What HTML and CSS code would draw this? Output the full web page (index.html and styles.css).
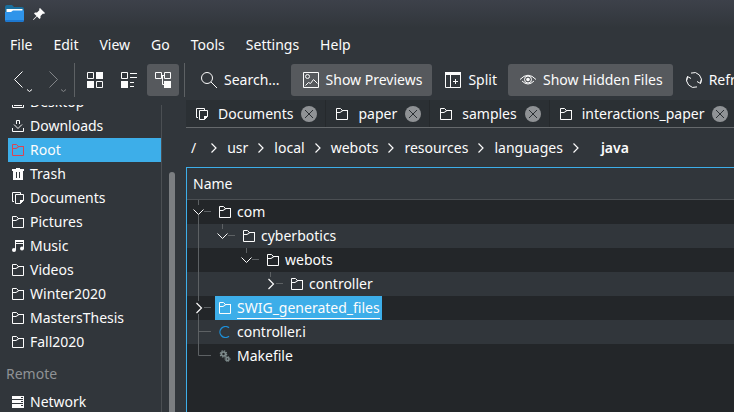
FILE: index.html
```html
<!DOCTYPE html>
<html lang="en">
<head>
<meta charset="utf-8">
<title>java — Dolphin</title>
<link rel="stylesheet" href="styles.css">
</head>
<body>
<svg class="defs" aria-hidden="true">
  <symbol id="folder" viewBox="0 0 12 12"><path d="M.5 .5h4l2 2h5v9H.5z" fill="none" stroke="currentColor"/><path d="M0 5h4l3-2h5V2H6.500L4 4H0z" fill="currentColor"/></symbol>
  <symbol id="docs" viewBox="0 0 12 12"><path d="M2 9.500H.5v-9h8V2M3.500 2.500h8v6l-3 3h-5z" fill="none" stroke="currentColor"/><path d="M8 12V8h4z" fill="currentColor"/></symbol>
  <symbol id="close" viewBox="0 0 16 16"><circle cx="8" cy="8" r="8" fill="#8f9295"/><path d="M4 4l8 8M12 4l-8 8" stroke="#2b3034" fill="none"/></symbol>
  <symbol id="right" viewBox="0 0 6 10"><path d="M.5 .5L5 5L.5 9.500" fill="none" stroke="currentColor" stroke-width="1.200"/></symbol>
  <symbol id="pipe" viewBox="0 0 24 24"><path d="M11.500 0v24" stroke="#5d6164"/></symbol>
  <symbol id="open" viewBox="0 0 24 24"><path d="M11.500 0v5M17 11.500h7" stroke="#5d6164"/><path d="M6.500 9.500l5 5l5-5" fill="none" stroke="#fcfcfc"/></symbol>
  <symbol id="shut" viewBox="0 0 24 24"><path d="M11.500 0v5M17 11.500h7" stroke="#5d6164"/><path d="M9.500 7l5 5l-5 5" fill="none" stroke="#fcfcfc" stroke-width="1.200"/></symbol>
</svg>

<header class="titlebar">
  <svg class="app" viewBox="0 0 20 18"><path d="M0 2q0-2 2-2h5l2 2h8q2 0 2 2v11H0z" fill="#1a6f9e"/><path d="M1.500 4h16v4h-16z" fill="#fff"/><path d="M0 7h6l2-1.500h11V15q0 2-2 2H2q-2 0-2-2z" fill="#2f94ea"/><path d="M0 15h19q0 2-2 2H2q-2 0-2-2z" fill="#1d78d0"/></svg>
  <svg class="pin" viewBox="0 0 12 12"><path d="M7 0l5 5-1 1-1-.5L7.500 8v2l-1 1L4 8.500L.5 12 0 11.500 3.500 8 1 5.500l1-1h2L6.500 2 6 1z" fill="#fcfcfc"/></svg>
</header>

<nav class="menubar">
  <button>File</button><button>Edit</button><button>View</button><button>Go</button><button>Tools</button><button>Settings</button><button>Help</button>
</nav>

<div class="toolbar">
  <button class="arrow" aria-label="Back"><svg viewBox="0 0 22 24"><path d="M11.500 2.500l-8 8 8 8" fill="none" stroke="#fcfcfc"/><path d="M16 20.500l2.500 2 2.500-2" fill="none" stroke="#fcfcfc"/></svg></button>
  <button class="arrow off" aria-label="Forward" disabled><svg viewBox="0 0 22 24"><path d="M4.500 2.500l8 8-8 8" fill="none" stroke="#fcfcfc"/><path d="M16 20.500l2.500 2 2.500-2" fill="none" stroke="#fcfcfc"/></svg></button>
  <span class="sep"></span>
  <button class="square" aria-label="Icons"><svg class="i16" viewBox="0 0 16 16"><path d="M.5 .5h6v6h-6zM9.500 9.500h6v6h-6z" fill="none" stroke="#fcfcfc"/><path d="M9 0h7v7H9zM0 9h7v7H0z" fill="#fcfcfc"/></svg></button>
  <button class="square" aria-label="Compact"><svg class="i16" viewBox="0 0 16 16"><path d="M.5 .5h6v6h-6zM9 1.500h7M9 5.500h7M9 10.500h4M9 14.500h4" fill="none" stroke="#fcfcfc"/><path d="M0 9h7v7H0z" fill="#fcfcfc"/></svg></button>
  <button class="square on" aria-label="Details"><svg class="i16" viewBox="0 0 16 16"><path d="M.5 .5h6v6h-6zM9.500 .5h6v6h-6zM7 3.500h2M7.500 4v8.500H9" fill="none" stroke="#fcfcfc"/><path d="M9 9h7v7H9z" fill="#fcfcfc"/></svg></button>
  <span class="sep narrow"></span>
  <button class="labelled"><svg class="i16" viewBox="0 0 16 16"><circle cx="6" cy="6" r="5.500" fill="none" stroke="#fcfcfc"/><path d="M10 10l6 6" stroke="#fcfcfc"/></svg>Search...</button>
  <button class="labelled on"><svg class="i16" viewBox="0 0 16 16"><path d="M.5 .5h15v15H.5zM2.500 13.500l3-3 2 1 3-4 4 4" fill="none" stroke="#fcfcfc"/><circle cx="4.500" cy="4.500" r="2" fill="none" stroke="#fcfcfc"/></svg>Show Previews</button>
  <button class="labelled"><svg class="i16" viewBox="0 0 16 16"><path d="M.5 .5h15v15H.5zM5.500 3v13M8 9.500h5M10.500 7v5" fill="none" stroke="#fcfcfc"/><path d="M0 0h16v3H0z" fill="#fcfcfc"/></svg>Split</button>
  <button class="labelled on"><svg class="i16" viewBox="0 0 16 16"><path d="M0 7.500Q8-1 16 7.500" fill="none" stroke="#fcfcfc"/><path d="M2 9q6 6 12 0" fill="none" stroke="#fcfcfc"/><circle cx="8" cy="7.500" r="3.500" fill="none" stroke="#fcfcfc"/><circle cx="8" cy="7.500" r="1.800" fill="#fcfcfc"/></svg>Show Hidden Files</button>
  <button class="labelled"><svg class="i16" viewBox="0 0 16 16"><path d="M5 1.100A7.500 7.500 0 0 1 14.500 11.500M15.500 7.500l-1 4-3.500-2M11 14.900A7.500 7.500 0 0 1 1.500 4.500M.5 8.500l1-4L5 6.500" fill="none" stroke="#fcfcfc"/></svg>Refresh</button>
</div>

<main class="body">
  <aside class="places">
    <ul>
      <li><a href="#"><svg class="i12" viewBox="0 0 12 12"><path d="M.5 1.500h11v10H.5zM2 9.500h8" fill="none" stroke="currentColor"/></svg>Desktop</a></li>
      <li><a href="#"><svg class="i12" viewBox="0 0 12 12"><path d="M4.500 4V.5h3V4M2 4.500l4 4 4-4M.5 8v3.500h11V8" fill="none" stroke="currentColor"/></svg>Downloads</a></li>
      <li class="current"><a href="#"><svg class="i12 red"><use href="#folder"/></svg>Root</a></li>
      <li><a href="#"><svg class="i12" viewBox="0 0 12 12"><path d="M0 1h4V0h4v1h4v2h-1v9H1V3H0zM4 4v6h1V4zM7 4v6h1V4z" fill="currentColor" fill-rule="evenodd"/></svg>Trash</a></li>
      <li><a href="#"><svg class="i12"><use href="#docs"/></svg>Documents</a></li>
      <li><a href="#"><svg class="i12"><use href="#folder"/></svg>Pictures</a></li>
      <li><a href="#"><svg class="i12" viewBox="0 0 12 12"><path d="M3 0h9v9h-1V4H4v6H3z" fill="currentColor"/><path d="M4 2.500h7" stroke="#31363b"/><circle cx="2" cy="10" r="2" fill="currentColor"/><circle cx="10" cy="8.500" r="2" fill="currentColor"/></svg>Music</a></li>
      <li><a href="#"><svg class="i12"><use href="#folder"/></svg>Videos</a></li>
      <li><a href="#"><svg class="i12"><use href="#folder"/></svg>Winter2020</a></li>
      <li><a href="#"><svg class="i12"><use href="#folder"/></svg>MastersThesis</a></li>
      <li><a href="#"><svg class="i12"><use href="#folder"/></svg>Fall2020</a></li>
    </ul>
    <h2>Remote</h2>
    <ul>
      <li><a href="#"><svg class="i12" viewBox="0 0 12 12"><path d="M0 0h12v12H0z" fill="currentColor"/><path d="M0 3.500h11M0 7.500h11M9 1.500h2M9 5.500h2M9 9.500h2" stroke="#31363b"/></svg>Network</a></li>
    </ul>
  </aside>
  <div class="gutter"><div class="thumb"></div></div>
  <section class="content">
    <div class="tabs">
      <div class="tab"><svg class="i12"><use href="#docs"/></svg><a href="#">Documents</a><button aria-label="Close Documents"><svg class="i16"><use href="#close"/></svg></button></div>
      <div class="tab"><svg class="i12"><use href="#folder"/></svg><a href="#">paper</a><button aria-label="Close paper"><svg class="i16"><use href="#close"/></svg></button></div>
      <div class="tab"><svg class="i12"><use href="#folder"/></svg><a href="#">samples</a><button aria-label="Close samples"><svg class="i16"><use href="#close"/></svg></button></div>
      <div class="tab"><svg class="i12"><use href="#folder"/></svg><a href="#">interactions_paper</a><button aria-label="Close interactions_paper"><svg class="i16"><use href="#close"/></svg></button></div>
    </div>
    <nav class="crumbs">
      <a class="root" href="#">/</a><svg><use href="#right"/></svg><a href="#">usr</a><svg><use href="#right"/></svg><a href="#">local</a><svg><use href="#right"/></svg><a href="#">webots</a><svg><use href="#right"/></svg><a href="#">resources</a><svg><use href="#right"/></svg><a href="#">languages</a><svg><use href="#right"/></svg><a class="here" href="#">java</a>
    </nav>
    <div class="view">
      <table>
        <thead><tr><th>Name</th></tr></thead>
        <tbody>
          <tr><td><div class="row"><svg class="cell"><path d="M11.500 15v9" stroke="#5d6164"/><use href="#open"/></svg><span class="item"><svg class="i12"><use href="#folder"/></svg><span>com</span></span></div></td></tr>
          <tr><td><div class="row"><svg class="cell"><use href="#pipe"/></svg><svg class="cell"><use href="#open"/></svg><span class="item"><svg class="i12"><use href="#folder"/></svg><span>cyberbotics</span></span></div></td></tr>
          <tr><td><div class="row"><svg class="cell"><use href="#pipe"/></svg><span class="cell"></span><svg class="cell"><use href="#open"/></svg><span class="item"><svg class="i12"><use href="#folder"/></svg><span>webots</span></span></div></td></tr>
          <tr><td><div class="row"><svg class="cell"><use href="#pipe"/></svg><span class="cell"></span><span class="cell"></span><svg class="cell"><use href="#shut"/></svg><span class="item"><svg class="i12"><use href="#folder"/></svg><span>controller</span></span></div></td></tr>
          <tr><td><div class="row"><svg class="cell"><path d="M11.500 18v6" stroke="#5d6164"/><use href="#shut"/></svg><span class="item selected"><svg class="i12"><use href="#folder"/></svg><span>SWIG_generated_files</span></span></div></td></tr>
          <tr><td><div class="row"><svg class="cell"><path d="M11.500 0v24M12 11.500h12" stroke="#5d6164"/></svg><span class="item"><svg class="i12" viewBox="0 0 12 12"><path d="M10 1.800A5.500 5.500 0 1 0 10 10.200" fill="none" stroke="#1d8fd8" stroke-width="1.300"/></svg><span>controller.i</span></span></div></td></tr>
          <tr><td><div class="row"><svg class="cell"><path d="M11.500 0v11.500H24" fill="none" stroke="#5d6164"/></svg><span class="item"><svg class="i12" viewBox="0 0 12 12"><g fill="none" stroke="#7f8c8d"><circle cx="4.500" cy="4" r="2" stroke-width="1.600"/><circle cx="4.500" cy="4" r="3.200" stroke-width="1.200" stroke-dasharray="1.500 1"/><circle cx="8.500" cy="9" r="1.500" stroke-width="1.400"/><circle cx="8.500" cy="9" r="2.500" stroke-dasharray="1.200 .8"/></g></svg><span>Makefile</span></span></div></td></tr>
        </tbody>
      </table>
    </div>
  </section>
</main>
</body>
</html>
```
FILE: styles.css
```css
* { box-sizing: border-box; }
html, body { height: 100%; }
body {
  margin: 0;
  display: flex;
  flex-direction: column;
  overflow: hidden;
  background: #31363b;
  color: #fcfcfc;
  font: 14px/20px "Noto Sans", sans-serif;
  white-space: nowrap;
}
button {
  border: 0;
  padding: 0;
  background: none;
  color: inherit;
  font: inherit;
}
a { color: inherit; text-decoration: none; }
svg { display: block; flex: none; }
.defs { position: absolute; width: 0; height: 0; }
.i12 { width: 12px; height: 12px; }
.i16 { width: 16px; height: 16px; }

.titlebar {
  flex: none;
  display: flex;
  align-items: center;
  gap: 8px;
  height: 28px;
  padding-left: 5px;
  background: linear-gradient(#3d414a, #31363b);
}
.app { width: 20px; height: 18px; }
.pin { width: 12px; height: 12px; }

.menubar {
  flex: none;
  display: flex;
  gap: 21px;
  height: 34px;
  padding-left: 10px;
}

.toolbar {
  flex: none;
  display: flex;
  align-items: center;
  height: 36px;
  padding-left: 11px;
  overflow: hidden;
}
.toolbar button { flex: none; height: 32px; border-radius: 3px; }
.arrow { width: 34px; }
.arrow svg { width: 22px; height: 24px; margin-top: 2px; }
.arrow.off { opacity: .4; }
.square { width: 32px; margin-right: 2px; display: grid; place-items: center; }
.toolbar .on { background: #56595d; }
.sep { flex: none; width: 1px; height: 34px; background: #5d6164; margin: 0 4px 0 -5px; }
.sep.narrow { margin: 0 4px 0 3px; }
.labelled {
  display: flex;
  align-items: center;
  gap: 7px;
  padding: 0 10px 0 12px;
  margin-right: 1px;
}

.body { flex: 1; display: flex; min-height: 0; }
.places {
  flex: none;
  width: 162px;
  margin-top: 7px;
  padding-left: 8px;
  border-right: 1px solid #4b4f53;
  overflow: hidden;
}
.places ul { list-style: none; margin: 0; padding: 0; }
.places ul:first-child { margin-top: -15px; }
.places a {
  display: flex;
  align-items: center;
  gap: 6px;
  height: 24px;
  padding-left: 4px;
}
.places .current { background: #3daee9; }
.red { color: #da4453; }
.places h2 {
  margin: 0 0 0 -2px;
  padding: 10px 0 6px;
  font: inherit;
  color: #8f9295;
}
.gutter { flex: none; width: 24px; padding: 74px 0 0 7px; }
.thumb { width: 6px; height: 100%; border-radius: 3px 3px 0 0; background: #7b7e81; }

.content { flex: 1; min-width: 0; display: flex; flex-direction: column; padding-top: 2px; }
.tabs {
  flex: none;
  display: flex;
  height: 28px;
  background: #2b3034;
  border-bottom: 1px solid #65696c;
  overflow: hidden;
}
.tab {
  flex: none;
  display: flex;
  align-items: center;
  padding: 0 8px 0 10px;
  border-right: 1px solid #25292c;
}
.tab a { margin: 0 8px 0 10px; }
.crumbs {
  flex: none;
  display: flex;
  align-items: center;
  height: 39px;
  padding-left: 5px;
}
.crumbs svg { width: 6px; height: 10px; margin: 0 10px; }
.crumbs .root { margin-right: 5px; }
.crumbs .here { margin-left: 12px; font-weight: 600; }

.view { flex: 1; background: #232629; border: solid #3daee9; border-width: 1px 0 0 1px; }
table { width: 100%; border-spacing: 0; }
th {
  height: 32px;
  padding: 0 6px;
  text-align: left;
  font-weight: 400;
  background: #31363b;
  border-bottom: 1px solid #4b4f53;
}
td { padding: 0; }
tbody tr:nth-child(even) { background: #31363b; }
.row { display: flex; height: 24px; }
.cell { width: 24px; height: 24px; }
.item {
  display: flex;
  align-items: center;
  gap: 6px;
  margin-left: 4px;
  padding: 0 2px 0 4px;
}
.selected { background: #3daee9; }
.selected span { box-shadow: 0 1px #fcfcfc; }
```
